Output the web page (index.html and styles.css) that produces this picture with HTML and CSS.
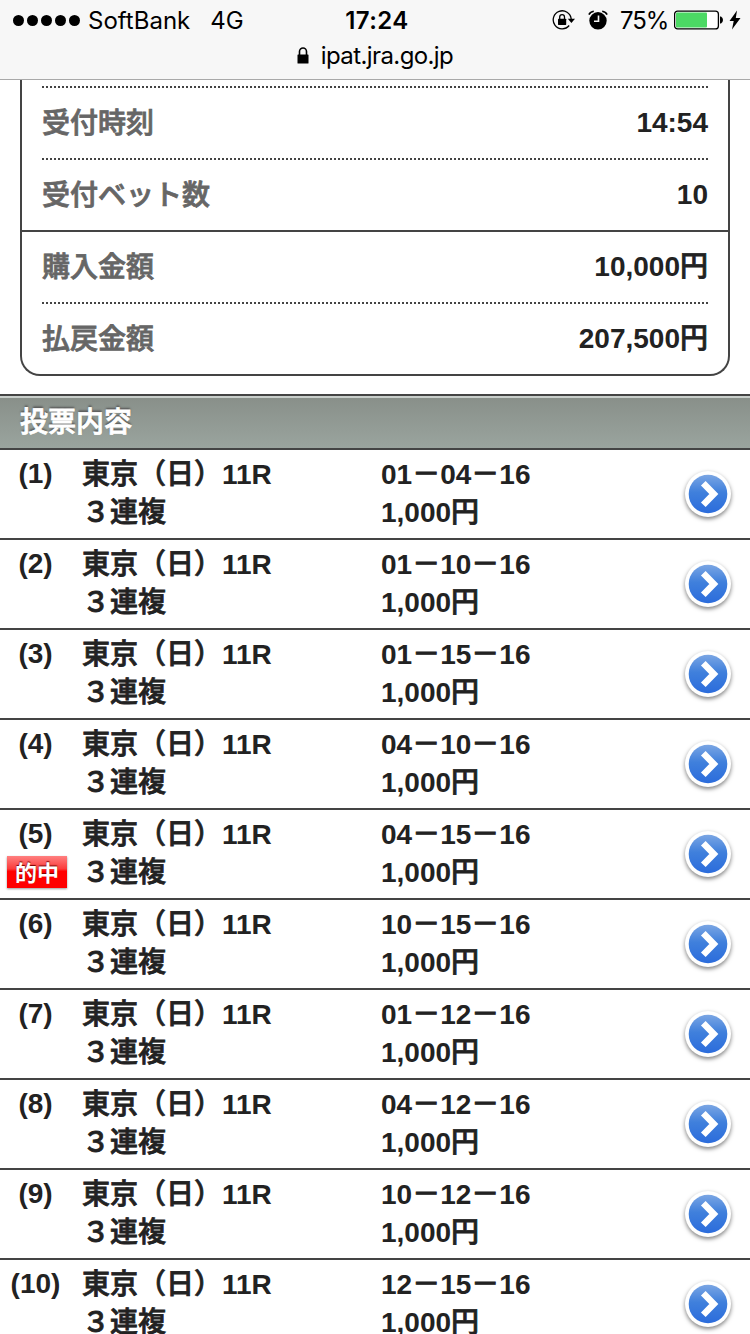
FILE: index.html
```html
<!DOCTYPE html>
<html lang="ja">
<head>
    <meta charset="UTF-8">
    <meta name="viewport" content="width=device-width, initial-scale=1.0">
    <title>投票内容</title>
    <link rel="stylesheet" href="styles.css">
</head>
<body>
    <svg class="defs" width="0" height="0">
        <defs>
            <linearGradient id="blue" x1="0" y1="0" x2="0" y2="1">
                <stop offset="0" stop-color="#7ba6e4"/>
                <stop offset="0.45" stop-color="#4080dc"/>
                <stop offset="1" stop-color="#2b6cdc"/>
            </linearGradient>
            <symbol id="arrow" viewBox="0 0 48 48">
                <circle cx="24" cy="24" r="23" fill="#fff"/>
                <circle cx="24" cy="24" r="19.3" fill="url(#blue)"/>
                <path d="M19.3 13.3 L29.8 24 L19.3 34.7" fill="none" stroke="#fff" stroke-width="6.5"/>
            </symbol>
        </defs>
    </svg>

    <header class="browser-bar">
        <div class="status">
            <div class="status-left">
                <span class="signal"><i></i><i></i><i></i><i></i><i></i></span>
                <span class="carrier">SoftBank</span>
                <span class="network">4G</span>
            </div>
            <div class="clock">17:24</div>
            <div class="status-right">
                <svg class="rotation" width="24" height="20" viewBox="0 0 24 20">
                    <path d="M19.2 9 A9 9 0 1 0 17.2 15.5" fill="none" stroke="#000" stroke-width="1.3"/>
                    <path d="M15.8 8.8 H23 L19.4 13 Z"/>
                    <rect x="6" y="8.7" width="8.2" height="6.2" rx="0.6"/>
                    <path d="M7.7 9 V7 a2.4 2.4 0 0 1 4.8 0 V9" fill="none" stroke="#000" stroke-width="1.3"/>
                </svg>
                <svg class="alarm" width="20" height="20" viewBox="0 0 20 20">
                    <circle cx="10" cy="10.8" r="8.7"/>
                    <path d="M10.5 5.5 V11.2 H6" fill="none" stroke="#f7f7f7" stroke-width="1.6"/>
                    <path d="M0.9 4.6 Q2.3 1.7 5.8 1.3 M19.1 4.6 Q17.7 1.7 14.2 1.3" fill="none" stroke="#000" stroke-width="1.6"/>
                </svg>
                <span class="percent">75%</span>
                <svg class="battery" width="49" height="20" viewBox="0 0 49 20">
                    <rect x="0.6" y="1.1" width="43.8" height="17.8" rx="3" fill="#fff" stroke="#000" stroke-width="1.3"/>
                    <rect x="2" y="2.5" width="31" height="15" rx="1" fill="#4cd964"/>
                    <path d="M46 6.5 h1 q2 1 2 3.5 t-2 3.5 h-1 z"/>
                </svg>
                <svg class="bolt" width="12" height="20" viewBox="0 0 12 20">
                    <path d="M8 0.5 L0.5 11 H4.7 L3 19.5 L11.5 8 H6.8 Z"/>
                </svg>
            </div>
        </div>
        <div class="address">
            <svg width="12" height="17" viewBox="0 0 12 17">
                <rect x="0.5" y="7.5" width="11" height="9" rx="0.6"/>
                <path d="M2.5 8 V4.5 a3.4 3.4 0 0 1 7 0 V8" fill="none" stroke="#000" stroke-width="1.6"/>
            </svg>
            <span>ipat.jra.go.jp</span>
        </div>
    </header>

    <main>
        <dl class="summary">
            <div class="summary-row dotted"><dt>受付時刻</dt><dd>14:54</dd></div>
            <div class="summary-row dotted"><dt>受付ベット数</dt><dd>10</dd></div>
            <div class="summary-row solid"><dt>購入金額</dt><dd>10,000<span class="jp">円</span></dd></div>
            <div class="summary-row dotted"><dt>払戻金額</dt><dd>207,500<span class="jp">円</span></dd></div>
        </dl>

        <h2 class="section-title">投票内容</h2>

        <ul class="bets">
            <li class="bet">
                <div class="num">(1)</div>
                <div class="race"><span class="jp">東京（日）</span>11R<br><span class="jp">３連複</span></div>
                <div class="pick">01<span class="jp">－</span>04<span class="jp">－</span>16<br>1,000<span class="jp">円</span></div>
                <svg class="arrow"><use href="#arrow"/></svg>
            </li>
            <li class="bet">
                <div class="num">(2)</div>
                <div class="race"><span class="jp">東京（日）</span>11R<br><span class="jp">３連複</span></div>
                <div class="pick">01<span class="jp">－</span>10<span class="jp">－</span>16<br>1,000<span class="jp">円</span></div>
                <svg class="arrow"><use href="#arrow"/></svg>
            </li>
            <li class="bet">
                <div class="num">(3)</div>
                <div class="race"><span class="jp">東京（日）</span>11R<br><span class="jp">３連複</span></div>
                <div class="pick">01<span class="jp">－</span>15<span class="jp">－</span>16<br>1,000<span class="jp">円</span></div>
                <svg class="arrow"><use href="#arrow"/></svg>
            </li>
            <li class="bet">
                <div class="num">(4)</div>
                <div class="race"><span class="jp">東京（日）</span>11R<br><span class="jp">３連複</span></div>
                <div class="pick">04<span class="jp">－</span>10<span class="jp">－</span>16<br>1,000<span class="jp">円</span></div>
                <svg class="arrow"><use href="#arrow"/></svg>
            </li>
            <li class="bet">
                <div class="num">(5)<span class="hit">的中</span></div>
                <div class="race"><span class="jp">東京（日）</span>11R<br><span class="jp">３連複</span></div>
                <div class="pick">04<span class="jp">－</span>15<span class="jp">－</span>16<br>1,000<span class="jp">円</span></div>
                <svg class="arrow"><use href="#arrow"/></svg>
            </li>
            <li class="bet">
                <div class="num">(6)</div>
                <div class="race"><span class="jp">東京（日）</span>11R<br><span class="jp">３連複</span></div>
                <div class="pick">10<span class="jp">－</span>15<span class="jp">－</span>16<br>1,000<span class="jp">円</span></div>
                <svg class="arrow"><use href="#arrow"/></svg>
            </li>
            <li class="bet">
                <div class="num">(7)</div>
                <div class="race"><span class="jp">東京（日）</span>11R<br><span class="jp">３連複</span></div>
                <div class="pick">01<span class="jp">－</span>12<span class="jp">－</span>16<br>1,000<span class="jp">円</span></div>
                <svg class="arrow"><use href="#arrow"/></svg>
            </li>
            <li class="bet">
                <div class="num">(8)</div>
                <div class="race"><span class="jp">東京（日）</span>11R<br><span class="jp">３連複</span></div>
                <div class="pick">04<span class="jp">－</span>12<span class="jp">－</span>16<br>1,000<span class="jp">円</span></div>
                <svg class="arrow"><use href="#arrow"/></svg>
            </li>
            <li class="bet">
                <div class="num">(9)</div>
                <div class="race"><span class="jp">東京（日）</span>11R<br><span class="jp">３連複</span></div>
                <div class="pick">10<span class="jp">－</span>12<span class="jp">－</span>16<br>1,000<span class="jp">円</span></div>
                <svg class="arrow"><use href="#arrow"/></svg>
            </li>
            <li class="bet">
                <div class="num">(10)</div>
                <div class="race"><span class="jp">東京（日）</span>11R<br><span class="jp">３連複</span></div>
                <div class="pick">12<span class="jp">－</span>15<span class="jp">－</span>16<br>1,000<span class="jp">円</span></div>
                <svg class="arrow"><use href="#arrow"/></svg>
            </li>
        </ul>
    </main>
</body>
</html>
```
FILE: styles.css
```css
* {
    box-sizing: border-box;
}
body {
    margin: 0;
    height: 1334px;
    overflow: hidden;
    background-color: #fff;
    color: #222;
    font-family: "Liberation Sans", "Noto Sans CJK JP", sans-serif;
    font-size: 28px;
    font-weight: bold;
}
.defs {
    display: block;
}
.jp {
    font-family: "Noto Sans CJK JP", sans-serif;
    font-weight: 500;
    line-height: 1;
    -webkit-text-stroke: 0.8px;
}

/* status bar and address */
.browser-bar {
    height: 80px;
    background-color: #f7f7f7;
    border-bottom: 1px solid #a9a9a9;
    color: #000;
    font-family: Inter, sans-serif;
    font-size: 24px;
    font-weight: 400;
}
.status {
    display: grid;
    grid-template-columns: 1fr auto 1fr;
    align-items: center;
    height: 40px;
    padding: 0 9px 0 13px;
}
.status-left,
.status-right {
    display: flex;
    align-items: center;
}
.status-right {
    justify-content: flex-end;
}
.signal {
    display: flex;
    gap: 3px;
    margin-right: 8px;
}
.signal i {
    width: 11px;
    height: 11px;
    border-radius: 50%;
    background-color: #000;
}
.network {
    margin-left: 20px;
}
.clock {
    font-weight: 600;
    letter-spacing: 0.4px;
}
.rotation {
    margin-right: 12px;
}
.alarm {
    margin-right: 12px;
}
.percent {
    margin-right: 6px;
    letter-spacing: -1.2px;
}
.battery {
    margin-right: 6px;
}
.address {
    display: flex;
    justify-content: center;
    align-items: center;
    gap: 12px;
    height: 30px;
    letter-spacing: -0.6px;
}

/* receipt summary, continues above the visible area */
.summary {
    margin: 0 20px;
    height: 296px;
    padding-top: 6px;
    border: 2px solid #444;
    border-top: 0;
    border-radius: 0 0 20px 20px;
}
.summary-row {
    display: flex;
    justify-content: space-between;
    height: 72px;
    padding: 2px 20px 0;
    line-height: 70px;
}
.summary-row dt {
    color: #666;
    font-family: "Noto Sans CJK JP", sans-serif;
    font-weight: 500;
    line-height: 66px;
    -webkit-text-stroke: 0.8px;
}
.summary-row dd {
    margin: 0;
}
.dotted {
    background: repeating-linear-gradient(90deg, #444 0 2px, transparent 2px 4px) 20px 0 / 666px 2px no-repeat;
}
.solid {
    border-top: 2px solid #444;
    padding-top: 0;
}

.section-title {
    height: 56px;
    margin: 18px 0 0;
    padding-left: 20px;
    border-top: 2px solid #444;
    border-bottom: 2px solid #444;
    background: linear-gradient(#888f89, #9aa49e);
    box-shadow: inset 0 2px #c9cfcb;
    color: #fff;
    font-family: "Noto Sans CJK JP", sans-serif;
    font-size: 28px;
    font-weight: 500;
    line-height: 49px;
    text-shadow: 0 -2px 2px #555;
    -webkit-text-stroke: 0.8px;
}

/* bet list */
.bets {
    margin: 0;
    padding: 0;
    list-style: none;
}
.bet {
    display: grid;
    grid-template-columns: 72px 299px 1fr 48px;
    height: 90px;
    padding: 6px 18px 0 10px;
    border-bottom: 2px solid #444;
    line-height: 38px;
}
.num {
    width: 51px;
    line-height: 36px;
    text-align: center;
}
.hit {
    display: block;
    width: 60px;
    height: 32px;
    margin: 4px 0 0 -3px;
    background: linear-gradient(#ff8080, #fb3c3c 40%, #f00 48%, #f00);
    box-shadow: 0 1px 2px rgba(0,0,0,0.4);
    color: #fff;
    font-family: "Noto Sans CJK JP", sans-serif;
    font-size: 22px;
    line-height: 31px;
    text-shadow: 0 -1px 1px #700;
}
.arrow {
    width: 48px;
    height: 48px;
    margin-top: 14px;
    filter: drop-shadow(0 2px 2px rgba(0,0,0,0.5));
}
```
